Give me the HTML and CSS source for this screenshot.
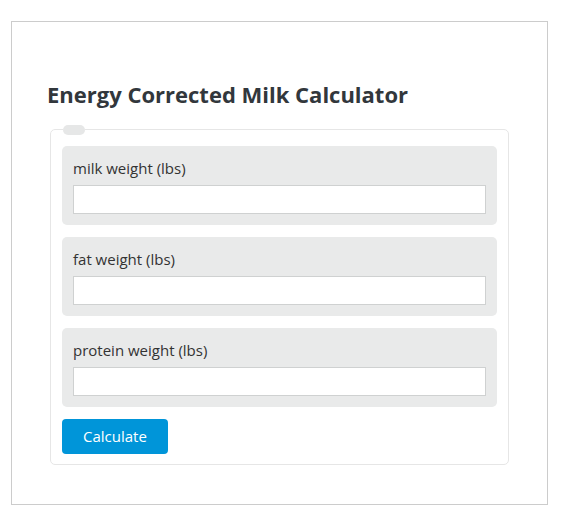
FILE: index.html
```html
<!DOCTYPE html>
<html lang="en">
<head>
    <meta charset="UTF-8">
    <meta name="viewport" content="width=device-width, initial-scale=1.0">
    <title>Energy Corrected Milk Calculator</title>
    <link rel="stylesheet" href="styles.css">
</head>
<body>
    <div class="page">
        <div class="calcBox">
            <h2 class="calcTitle">Energy Corrected Milk Calculator</h2>
            <form class="calcForm" action="">
                <fieldset>
                    <legend></legend>
                    <div class="field">
                        <label for="milk">milk weight (lbs)</label>
                        <input type="text" id="milk">
                    </div>
                    <div class="field">
                        <label for="fat">fat weight (lbs)</label>
                        <input type="text" id="fat">
                    </div>
                    <div class="field">
                        <label for="protein">protein weight (lbs)</label>
                        <input type="text" id="protein">
                    </div>
                    <button type="button">Calculate</button>
                </fieldset>
            </form>
        </div>
    </div>
</body>
</html>
```

FILE: styles.css
```css
* {
    margin: 0;
    padding: 0;
    box-sizing: border-box;
}

body {
    background: #ffffff;
    font-family: "Open Sans", "Noto Sans", sans-serif;
    color: #333;
}

.page {
    padding: 21px 0 0 11px;
}

.calcBox {
    width: 537px;
    height: 484px;
    border: 1px solid #cccccc;
    padding: 58px 38px 0 38px;
}

.calcTitle {
    font-size: 22px;
    font-weight: 700;
    line-height: 1.3;
    color: #32373c;
    margin: 0 0 16px -3px;
}

fieldset {
    border: 1px solid #e6e6e6;
    border-radius: 5px;
    padding: 11px 11px 10px 11px;
}

legend {
    width: 22px;
    height: 10px;
    margin-left: 1px;
    background: #e6e7e7;
    border-radius: 5px;
}

.field {
    background: #e9eaea;
    border-radius: 5px;
    padding: 11px;
    margin-bottom: 12px;
    display: flex;
    flex-direction: column;
}

.field label {
    font-size: 15px;
    line-height: 22px;
    color: #333;
    margin-bottom: 6px;
}

.field input {
    height: 29px;
    border: 1px solid #cfd1d1;
    background: #fff;
    outline: none;
    padding: 0 8px;
    font-size: 14px;
    font-family: inherit;
}

button {
    height: 35px;
    padding: 0 21px;
    background: #0095d9;
    color: #fff;
    border: none;
    border-radius: 4px;
    font-family: inherit;
    font-size: 15px;
    cursor: pointer;
}
```
